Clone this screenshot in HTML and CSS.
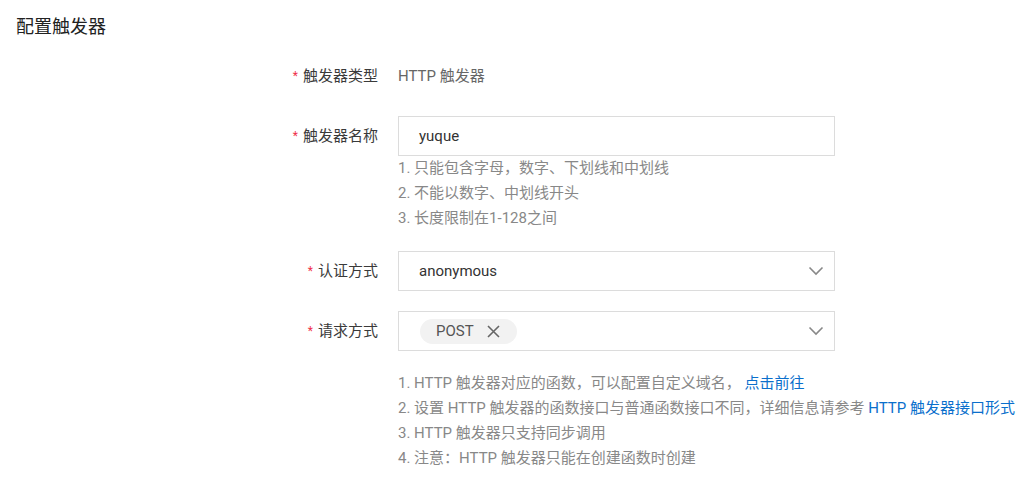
FILE: index.html
```html
<!DOCTYPE html>
<html lang="zh">
<head>
<meta charset="utf-8">
<link rel="stylesheet" href="styles.css">
</head>
<body>
<div class="page">
  <h2 class="title">配置触发器</h2>
  <div class="form">
    <div class="row">
      <div class="label"><span class="req">*</span>触发器类型</div>
      <div class="control"><div class="static">HTTP 触发器</div></div>
    </div>
    <div class="row">
      <div class="label"><span class="req">*</span>触发器名称</div>
      <div class="control">
        <div class="input">yuque</div>
        <ul class="help">
          <li>1. 只能包含字母，数字、下划线和中划线</li>
          <li>2. 不能以数字、中划线开头</li>
          <li>3. 长度限制在1-128之间</li>
        </ul>
      </div>
    </div>
    <div class="row">
      <div class="label"><span class="req">*</span>认证方式</div>
      <div class="control">
        <div class="select">
          <span class="val">anonymous</span>
          <svg class="chev" width="16" height="10" viewBox="0 0 16 10"><path d="M1.5 1.5 L8 8 L14.5 1.5" fill="none" stroke="#888" stroke-width="1.6"/></svg>
        </div>
      </div>
    </div>
    <div class="row">
      <div class="label"><span class="req">*</span>请求方式</div>
      <div class="control">
        <div class="select multi">
          <span class="tag">POST<svg class="x" width="13" height="13" viewBox="0 0 13 13"><path d="M1 1 L12 12 M12 1 L1 12" stroke="#666" stroke-width="1.6" fill="none"/></svg></span>
          <svg class="chev" width="16" height="10" viewBox="0 0 16 10"><path d="M1.5 1.5 L8 8 L14.5 1.5" fill="none" stroke="#888" stroke-width="1.6"/></svg>
        </div>
        <ul class="help notes">
          <li>1. HTTP 触发器对应的函数，可以配置自定义域名， <a class="link">点击前往</a></li>
          <li>2. 设置 HTTP 触发器的函数接口与普通函数接口不同，详细信息请参考 <a class="link">HTTP 触发器接口形式</a></li>
          <li>3. HTTP 触发器只支持同步调用</li>
          <li>4. 注意：HTTP 触发器只能在创建函数时创建</li>
        </ul>
      </div>
    </div>
  </div>
</div>
</body>
</html>
```

FILE: styles.css
```css
html, body {
  margin: 0;
  padding: 0;
  background: #fff;
}
body {
  font-family: Roboto, "Noto Sans CJK SC", sans-serif;
  font-size: 15px;
  color: #333;
}
.page {
  width: 1021px;
}
.title {
  margin: 0;
  padding: 14px 16px 0;
  height: 56px;
  box-sizing: border-box;
  font-size: 18px;
  line-height: 26px;
  font-weight: 400;
  color: #222;
}
.form {
  display: flex;
  flex-direction: column;
  gap: 20px;
}
.row {
  display: grid;
  grid-template-columns: 378px 437px;
  column-gap: 20px;
  align-items: start;
}
.label {
  text-align: right;
  line-height: 40px;
  height: 40px;
  color: #3a3a3a;
}
.req {
  color: #f0324a;
  font-size: 12px;
  margin-right: 5px;
  vertical-align: 1px;
}
.static {
  line-height: 40px;
  color: #666;
}
.input, .select {
  height: 40px;
  box-sizing: border-box;
  border: 1px solid #dcdcdc;
  background: #fff;
  display: flex;
  align-items: center;
  padding-left: 20px;
  color: #333;
}
.select {
  justify-content: space-between;
  padding-right: 10px;
}
.multi {
  padding-left: 21px;
}
.tag {
  display: inline-flex;
  align-items: center;
  height: 25px;
  border-radius: 13px;
  background: #f2f2f2;
  padding: 0 17px 0 16px;
  gap: 13px;
  color: #555;
}
.chev {
  display: block;
}
.help {
  list-style: none;
  margin: 0;
  padding: 0;
  color: #888;
  line-height: 25px;
}
.notes {
  margin-top: 20px;
  white-space: nowrap;
}
.link {
  color: #0a6fcc;
  text-decoration: none;
}
```
